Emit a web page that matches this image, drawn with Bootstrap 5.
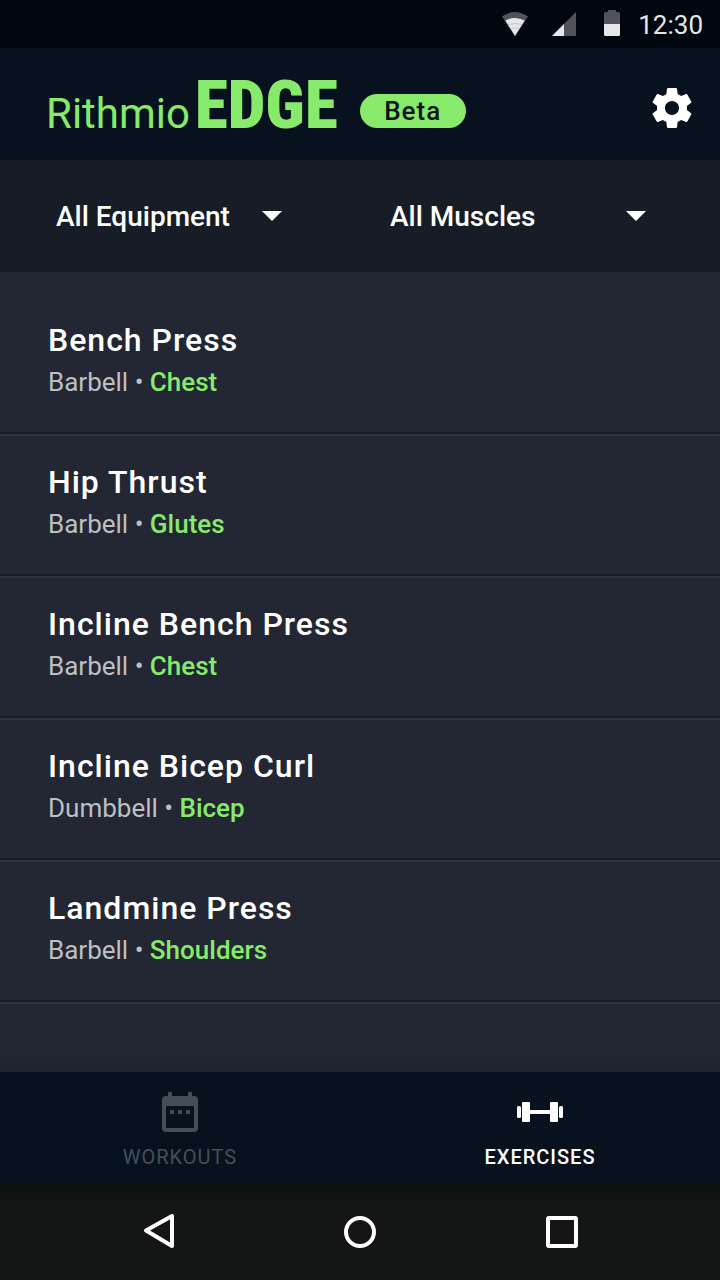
<!DOCTYPE html>
<html lang="en">
<head>
<meta charset="utf-8">
<meta name="viewport" content="width=device-width, initial-scale=1">
<title>Rithmio EDGE – Exercises</title>
<link rel="stylesheet" href="https://cdn.jsdelivr.net/npm/bootstrap@5.3.0/dist/css/bootstrap.min.css">
<style>
  :root { --lime: #88ea6b; --navy: #08121e; --slate: #222733; }
  body { font-family: Roboto, "Liberation Sans", sans-serif; background: var(--slate); color: #fff; }
  svg { display: block; flex: none; }
  .status-bar { height: 48px; background: #01070f; color: #e5e6e7; font-size: 26px; line-height: 48px; padding: 2px 17px 0 0; }
  .status-bar .gap-signal { gap: 24px; margin: 0 18px 2px 0; }
  .app-header { height: 112px; background: var(--navy); padding: 8px 24px 0 46px; }
  .brand { color: var(--lime); line-height: 64px; gap: 5px; padding-top: 3px; }
  .brand-thin { font-size: 42px; font-weight: 400; }
  .brand-bold { font-family: "Roboto Condensed", "Liberation Sans Narrow", Roboto, sans-serif; font-size: 67px; font-weight: 900; }
  .beta-pill { width: 106px; height: 34px; margin: 6px 0 0 22px; background: var(--lime); color: var(--navy); font-size: 26px; font-weight: 500; line-height: 34px; letter-spacing: 1px; }
  .filters { height: 112px; gap: 108px; padding: 0 74px 0 56px; background: linear-gradient(#191b26, #161d27 12px); }
  .filter-select { appearance: none; border: 0; padding: 2px 52px 0 0; color: #fff; font-size: 28px; font-weight: 500; line-height: 40px;
    background: transparent url("data:image/svg+xml,%3Csvg xmlns='http://www.w3.org/2000/svg' viewBox='0 0 20 10'%3E%3Cpath fill='%23fff' d='M0 0h20L10 10z'/%3E%3C/svg%3E") no-repeat right center / 20px 10px; }
  .filter-select option { color: #fff; background: #161d27; }
  .exercise-list { padding-top: 22px; background: linear-gradient(to top, #1d222d, var(--slate) 22px); }
  .exercise { height: 142px; padding: 25px 48px 0; border-bottom: 2px solid #2d3440; box-shadow: inset 0 -2px #171c27; }
  .exercise-name { font-size: 32px; font-weight: 500; line-height: 42px; letter-spacing: 1px; }
  .exercise-info { font-size: 26px; line-height: 42px; color: #bdbfc2; }
  .muscle { color: var(--lime); font-weight: 500; }
  .tab-bar { height: 112px; background: var(--navy); }
  .tab-item { color: #454e57; font-size: 20px; line-height: 24px; letter-spacing: 1px; padding-top: 16px; gap: 9px; }
  .tab-item.active { color: #fff; font-weight: 500; }
  .system-bar { height: 96px; gap: 162px; background: linear-gradient(#0e0f0f, #141615 24px); }
</style>
</head>
<body class="d-flex flex-column min-vh-100">
  <div class="status-bar d-flex justify-content-end align-items-center">
    <div class="gap-signal d-flex align-items-center">
      <svg width="26" height="26" viewBox="0 0 26 26" aria-hidden="true"><path fill="#50545a" d="M0 5.500Q13-3.500 26 5.500L13 25z"/><path fill="#e5e6e7" d="M3.300 9.500Q13 4.500 22.700 9.500L13 25z"/><path fill="none" stroke="#c4c6c8" d="M6 13.500q7-2 14 0M8.500 17.500q4.500-1 9 0"/></svg>
      <svg width="24" height="26" viewBox="0 0 24 26" aria-hidden="true"><path fill="#50545a" d="M24 1v24H0z"/><path fill="#e5e6e7" d="M12 13v12H0z"/></svg>
      <svg class="ms-1" width="16" height="28" viewBox="0 0 16 28" aria-hidden="true"><path fill="#50545a" d="M4 0h8v2h2.500Q16 2 16 3.500V14H0V3.500Q0 2 1.500 2H4z"/><path fill="#e5e6e7" d="M0 14h16v10.500q0 1.500-1.500 1.500h-13Q0 26 0 24.500z"/></svg>
    </div>
    <time>12:30</time>
  </div>

  <header class="app-header d-flex align-items-center">
    <h1 class="brand d-flex align-items-baseline m-0"><span class="brand-thin">Rithmio</span><span class="brand-bold">EDGE</span></h1>
    <span class="beta-pill rounded-pill text-center">Beta</span>
    <button type="button" class="btn p-0 border-0 ms-auto text-white" aria-label="Settings">
      <svg width="48" height="48" viewBox="0 0 24 24" fill="currentColor" aria-hidden="true"><path d="M19.430 12.980c.04-.32.07-.64.07-.98s-.03-.66-.07-.98l2.110-1.650c.19-.15.24-.42.12-.64l-2-3.460c-.12-.22-.39-.3-.61-.22l-2.490 1c-.52-.4-1.080-.73-1.690-.98l-.38-2.650C14.460 2.180 14.250 2 14 2h-4c-.25 0-.46.18-.49.42l-.38 2.650c-.61.25-1.170.59-1.690.98l-2.490-1c-.23-.09-.49 0-.61.22l-2 3.460c-.13.22-.07.49.12.64l2.110 1.650c-.04.32-.07.65-.07.98s.03.66.07.98l-2.110 1.650c-.19.15-.24.42-.12.64l2 3.460c.12.22.39.3.61.22l2.490-1c.52.4 1.080.73 1.690.98l.38 2.650c.03.24.24.42.49.42h4c.25 0 .46-.18.49-.42l.38-2.650c.61-.25 1.170-.59 1.690-.98l2.490 1c.23.09.49 0 .61-.22l2-3.460c.12-.22.07-.49-.12-.64l-2.110-1.650zM12 15.500c-1.930 0-3.500-1.570-3.500-3.500s1.570-3.500 3.500-3.500 3.500 1.570 3.500 3.500-1.570 3.500-3.500 3.500z"/></svg>
    </button>
  </header>

  <form class="filters d-flex align-items-center">
    <select class="filter-select" aria-label="Equipment"><option>All Equipment</option><option>Barbell</option><option>Dumbbell</option></select>
    <select class="filter-select flex-grow-1" aria-label="Muscles"><option>All Muscles</option><option>Bicep</option><option>Chest</option><option>Glutes</option><option>Shoulders</option></select>
  </form>

  <main class="exercise-list flex-grow-1">
    <ul class="list-unstyled m-0">
      <li class="exercise"><h2 class="exercise-name m-0">Bench Press</h2><p class="exercise-info m-0">Barbell • <span class="muscle">Chest</span></p></li>
      <li class="exercise"><h2 class="exercise-name m-0">Hip Thrust</h2><p class="exercise-info m-0">Barbell • <span class="muscle">Glutes</span></p></li>
      <li class="exercise"><h2 class="exercise-name m-0">Incline Bench Press</h2><p class="exercise-info m-0">Barbell • <span class="muscle">Chest</span></p></li>
      <li class="exercise"><h2 class="exercise-name m-0">Incline Bicep Curl</h2><p class="exercise-info m-0">Dumbbell • <span class="muscle">Bicep</span></p></li>
      <li class="exercise"><h2 class="exercise-name m-0">Landmine Press</h2><p class="exercise-info m-0">Barbell • <span class="muscle">Shoulders</span></p></li>
    </ul>
  </main>

  <nav class="tab-bar row g-0" aria-label="Main">
    <a href="#workouts" class="tab-item col-6 d-flex flex-column align-items-center text-decoration-none">
      <svg width="48" height="48" viewBox="0 0 48 48" aria-hidden="true"><path fill="currentColor" fill-rule="evenodd" d="M12 4h4v4h16V4h4v4h2q4 0 4 4v28q0 4-4 4H10q-4 0-4-4V12q0-4 4-4h2zM10 18v22h28V18zM14 22h4v4h-4zM22 22h4v4h-4zM30 22h4v4h-4z"/></svg>
      WORKOUTS
    </a>
    <a href="#exercises" class="tab-item active col-6 d-flex flex-column align-items-center text-decoration-none" aria-current="page">
      <svg width="48" height="48" viewBox="0 0 48 48" fill="currentColor" aria-hidden="true"><rect x="1" y="18" width="4" height="12" rx="1.500"/><rect x="6" y="14" width="8" height="20" rx="1"/><path d="M14 22h20v4H14z"/><rect x="34" y="14" width="8" height="20" rx="1"/><rect x="43" y="18" width="4" height="12" rx="1.500"/></svg>
      EXERCISES
    </a>
  </nav>

  <div class="system-bar d-flex justify-content-center align-items-center">
    <button type="button" class="btn p-0 border-0 text-white" aria-label="Back"><svg width="40" height="40" viewBox="0 0 40 40" fill="none" stroke="currentColor" stroke-width="4" stroke-linejoin="round" aria-hidden="true"><path d="M34 4v30L8 18.500z"/></svg></button>
    <button type="button" class="btn p-0 border-0 text-white" aria-label="Home"><svg width="40" height="40" viewBox="0 0 40 40" fill="none" stroke="currentColor" stroke-width="4" aria-hidden="true"><circle cx="20" cy="20" r="14"/></svg></button>
    <button type="button" class="btn p-0 border-0 text-white" aria-label="Recent apps"><svg width="40" height="40" viewBox="0 0 40 40" fill="none" stroke="currentColor" stroke-width="4" aria-hidden="true"><rect x="6" y="6" width="28" height="28" rx="1"/></svg></button>
  </div>
<script src="https://cdn.jsdelivr.net/npm/bootstrap@5.3.0/dist/js/bootstrap.bundle.min.js"></script>
</body>
</html>
